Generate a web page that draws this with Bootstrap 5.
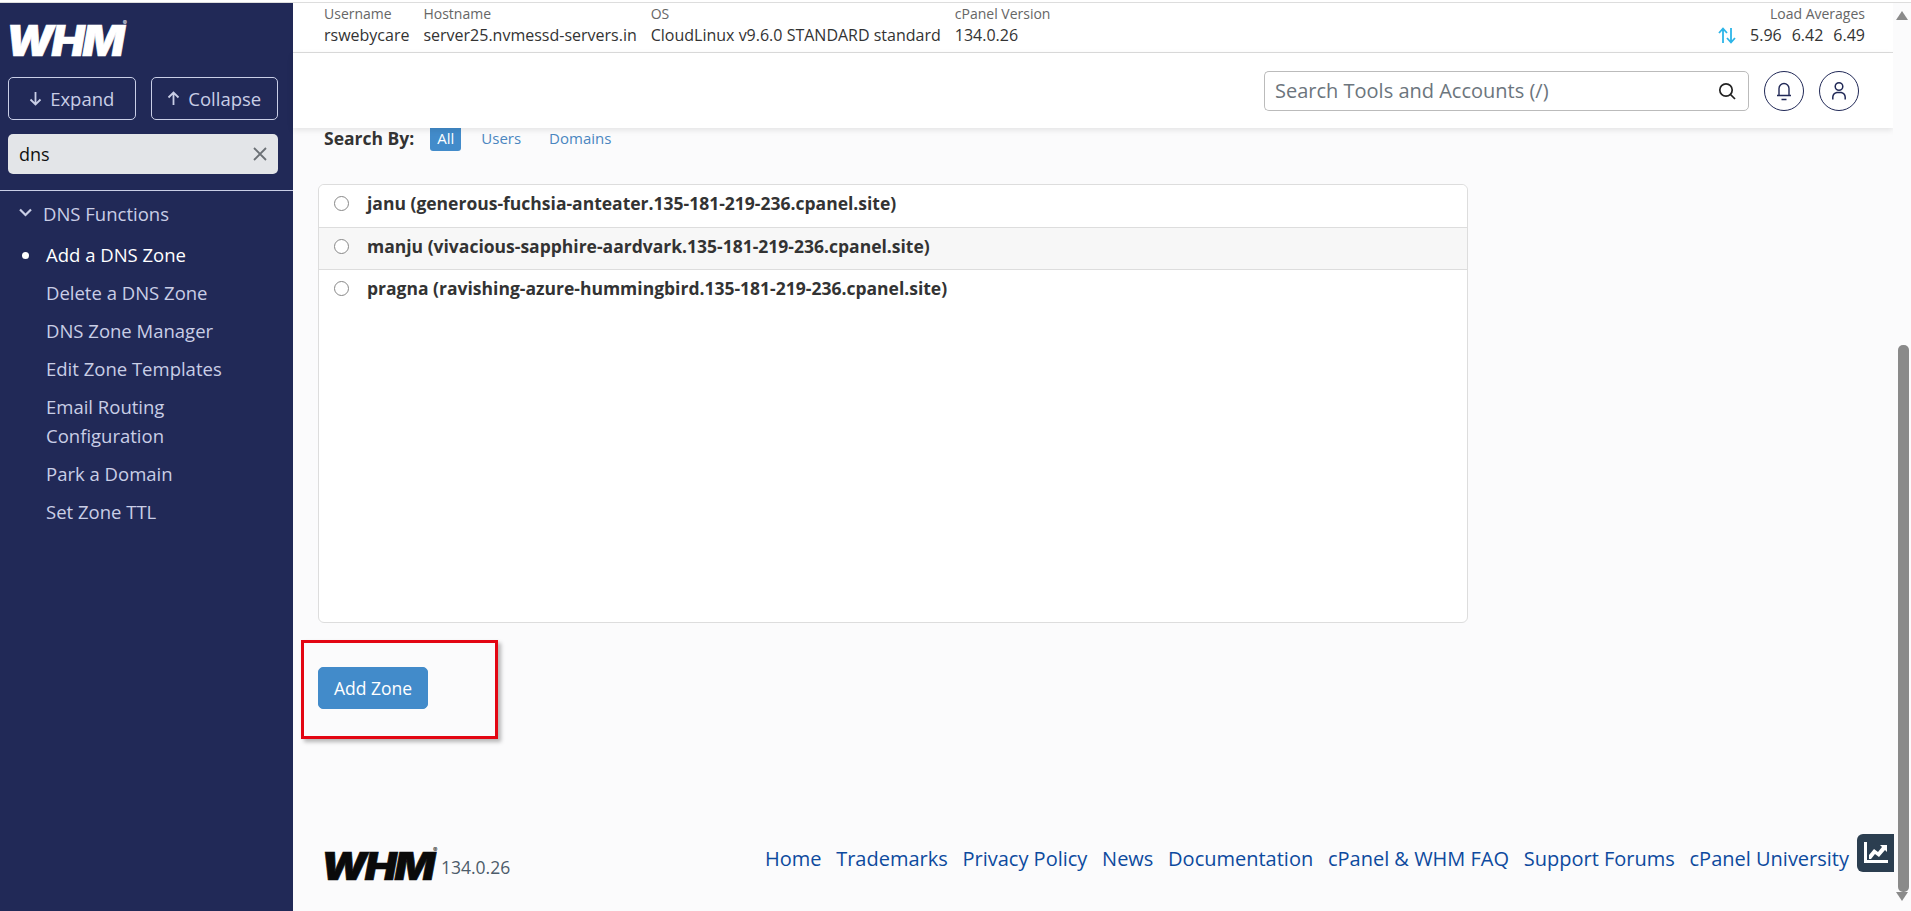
<!DOCTYPE html>
<html lang="en">
<head>
<meta charset="UTF-8" />
<meta name="viewport" content="width=device-width, initial-scale=1.0" />
<title>Add a DNS Zone - WHM</title>
<link href="https://cdn.jsdelivr.net/npm/bootstrap@5.3.3/dist/css/bootstrap.min.css" rel="stylesheet" />
<script src="https://cdn.jsdelivr.net/npm/bootstrap@5.3.3/dist/js/bootstrap.bundle.min.js"></script>
<style>
  html, body { height: 911px; overflow: hidden; }
  body { font-family: "Open Sans", "Liberation Sans", sans-serif; background: #fff; color: #222; }
  .top-strip { height: 3px; background: #fff; border-bottom: 1px solid #ddd; }
  .page-row { height: 908px; }

  /* sidebar */
  .side { width: 293px; background: #212957; flex: none; }
  .logo-text { font-family: Inter, "Liberation Sans", sans-serif; font-weight: 900; font-style: italic; line-height: 1; letter-spacing: -2px; display: inline-block; transform-origin: left center; -webkit-text-stroke: .6px currentColor; }
  .logo-side { color: #fff; font-size: 42px; margin: 17px 0 0 6px; height: 38px; transform: scaleX(1.05); }
  .logo-reg { font-size: 6px; vertical-align: top; font-style: normal; font-weight: 400; letter-spacing: 0; -webkit-text-stroke: 0; }
  .side-btns { padding: 15px 15px 0 8px; gap: 15px; }
  .side-btn { flex: 1 1 0; height: 43px; font-size: 18.5px; color: #c9cee6; border: 1px solid #c9cee6; border-radius: 5px; padding: 0; }
  .side-btn:hover { color: #fff; border-color: #fff; }
  .side-search { margin: 14px 15px 0 8px; }
  .side-search input { height: 40px; background: #e3e5e8; border: 0; border-radius: 5px; font-size: 18px; color: #111; padding-left: 11px; }
  .side-x { position: absolute; right: 11px; top: 13px; }
  .side-line { border-top: 1px solid #c9cee6; margin-top: 16px; }
  .cat-head { color: #c9cee6; font-size: 18.5px; padding: 9px 0 0 19px; height: 44px; gap: 11px; }
  .side-link { display: block; color: #c9cee6; text-decoration: none; font-size: 18.5px; line-height: 29px; padding: 4.5px 20px 4.5px 46px; position: relative; }
  .side-link.on { color: #fff; }
  .side-link.on::before { content: ""; position: absolute; left: 22px; top: 17px; width: 7px; height: 7px; border-radius: 50%; background: #fff; }

  /* header */
  .main-col { background: #fbfbfc; min-width: 0; }
  .info-bar { height: 50px; background: #fff; border-bottom: 1px solid #ddd; padding: 0 28px 0 31px; gap: 14px; }
  .info-lab { font-size: 14px; line-height: 20px; color: #666; padding-top: 1px; }
  .info-val { font-size: 16px; line-height: 22px; color: #333; white-space: nowrap; }
  .load-nums { gap: 10px; }
  .tool-bar { height: 75px; background: #fff; box-shadow: 0 2px 6px rgba(0,0,0,.1); padding: 0 34px 0 0; position: relative; }
  .tool-search { width: 485px; height: 40px; }
  .tool-search input { font-size: 20px; height: 40px; padding: 0 0 0 10px; border-color: #bbb; border-radius: 5px 0 0 5px; }
  .tool-search input::placeholder { color: #6c757d; }
  .tool-search .input-group-text { height: 40px; background: #fff; border-color: #bbb; border-radius: 0 5px 5px 0; padding: 0 12px 0 4px; }
  .round-btn { width: 40px; height: 40px; border: 1px solid #212957; border-radius: 50%; background: #fff; margin-left: 15px; padding: 0; }

  /* content */
  .search-by { height: 23px; margin: 0 0 33px 31px; font-size: 17.5px; }
  .search-by b { font-weight: 700; color: #333; margin-right: 16px; position: relative; top: -1px; }
  .by-pill { font-size: 15px; padding: 0 7px 2px; line-height: 21px; color: #4a86c0; text-decoration: none; border-radius: 3px; margin-right: 14px; }
  .by-pill.on { background: #428bca; color: #fff; border-radius: 0 0 3px 3px; margin-right: 13px; }
  .accts { margin-left: 25px; width: 1150px; height: 439px; border-radius: 6px; border: 1px solid #ddd; overflow: hidden; }
  .acct-row { padding: 0 0 5px 15px; gap: 18px; font-size: 17.5px; font-weight: 700; color: #333; border-color: #ddd; height: 42px; }
  .acct-row:first-child { height: 43px; }
  .acct-row .form-check-input { width: 15px; height: 15px; margin: 0; border-color: #888; }
  .acct-row.alt { background: #f7f7f7; }
  .mark-box { border: 3px solid #e30613; box-shadow: 3px 3px 4px rgba(0,0,0,.28); margin: 17px 0 0 8px; width: 197px; height: 99px; padding: 24px 0 0 14px; }
  .add-btn { background: #428bca; border-color: #428bca; width: 110px; height: 42px; font-size: 17.5px; padding: 0; border-radius: 5px; }

  /* footer */
  .foot { padding: 0 44px 0 30px; margin-top: 105px; }
  .logo-foot { color: #0a0a0a; font-size: 38px; transform: scaleX(1.12); margin-left: -2px; }
  .foot-ver { font-size: 17.5px; color: #4d5c6b; margin-left: 16px; margin-top: 3px; }
  .foot-links { gap: 14.7px; margin-bottom: 14px; }
  .foot-links a { font-size: 20px; color: #0d4a9e; text-decoration: none; white-space: nowrap; }
  .chart-btn { position: absolute; right: 17px; top: 831px; width: 37px; height: 38px; background: #2b3e50; border-radius: 6px 0 0 6px; }

  /* fake scrollbar */
  .sbar { width: 18px; flex: none; background: #fbfbfc; position: relative; }
  .sbar-up, .sbar-dn { position: absolute; left: 3px; width: 0; height: 0; border-left: 6px solid transparent; border-right: 6px solid transparent; }
  .sbar-up { top: 8px; border-bottom: 9px solid #8a8a8a; }
  .sbar-dn { top: 889px; border-top: 9px solid #8a8a8a; }
  .sbar-thumb { position: absolute; left: 5px; width: 11px; top: 342px; height: 547px; background: #8a8a8a; border-radius: 5px; }
</style>
</head>
<body>
  <div class="top-strip"></div>
  <div class="page-row d-flex position-relative">

    <!-- sidebar -->
    <aside class="side d-flex flex-column">
      <div><span class="logo-text logo-side">WHM<span class="logo-reg">®</span></span></div>
      <div class="side-btns d-flex">
        <button class="btn side-btn d-flex align-items-center justify-content-center gap-2">
          <svg width="13" height="15" viewBox="0 0 13 15" fill="none" stroke="currentColor" stroke-width="1.8"><path d="M6.5 1v12M1.5 8.5l5 5 5-5"/></svg>Expand
        </button>
        <button class="btn side-btn d-flex align-items-center justify-content-center gap-2">
          <svg width="13" height="15" viewBox="0 0 13 15" fill="none" stroke="currentColor" stroke-width="1.8"><path d="M6.5 14V2M1.5 6.5l5-5 5 5"/></svg>Collapse
        </button>
      </div>
      <div class="side-search position-relative">
        <input type="text" class="form-control" value="dns" />
        <svg class="side-x" width="14" height="14" viewBox="0 0 14 14" stroke="#6b7075" stroke-width="1.8"><path d="M1 1l12 12M13 1L1 13"/></svg>
      </div>
      <div class="side-line"></div>
      <div class="cat-head d-flex align-items-start">
        <svg class="mt-2" width="13" height="9" viewBox="0 0 13 9" fill="none" stroke="#c9cee6" stroke-width="2.2"><path d="M1 1.5l5.5 5.5L12 1.5"/></svg>
        <span>DNS Functions</span>
      </div>
      <nav>
        <a class="side-link on" href="#">Add a DNS Zone</a>
        <a class="side-link" href="#">Delete a DNS Zone</a>
        <a class="side-link" href="#">DNS Zone Manager</a>
        <a class="side-link" href="#">Edit Zone Templates</a>
        <a class="side-link" href="#">Email Routing Configuration</a>
        <a class="side-link" href="#">Park a Domain</a>
        <a class="side-link" href="#">Set Zone TTL</a>
      </nav>
    </aside>

    <!-- main -->
    <div class="main-col flex-grow-1 d-flex flex-column">
      <div class="info-bar d-flex">
        <div><div class="info-lab">Username</div><div class="info-val">rswebycare</div></div>
        <div><div class="info-lab">Hostname</div><div class="info-val">server25.nvmessd-servers.in</div></div>
        <div><div class="info-lab">OS</div><div class="info-val">CloudLinux v9.6.0 STANDARD standard</div></div>
        <div><div class="info-lab">cPanel Version</div><div class="info-val">134.0.26</div></div>
        <div class="ms-auto text-end">
          <div class="info-lab">Load Averages</div>
          <div class="info-val d-flex align-items-center load-nums">
            <svg width="18" height="17" viewBox="0 0 18 17" fill="none" stroke="#2cb5e8" stroke-width="1.8"><path d="M5 16V2M1 6l4-4.5L9 6M13 1v14M9 11l4 4.5 4-4.5"/></svg>
            <span class="ms-1">5.96</span><span>6.42</span><span>6.49</span>
          </div>
        </div>
      </div>
      <div class="tool-bar d-flex align-items-center justify-content-end">
        <div class="input-group tool-search">
          <input type="text" class="form-control border-end-0" placeholder="Search Tools and Accounts (/)" />
          <span class="input-group-text">
            <svg width="18" height="18" viewBox="0 0 18 18" fill="none" stroke="#222" stroke-width="1.7"><circle cx="8" cy="8" r="6.2"/><path d="M12.5 12.5l4.5 4.5"/></svg>
          </span>
        </div>
        <button class="round-btn d-flex align-items-center justify-content-center">
          <svg width="16" height="20" viewBox="0 0 16 20" fill="none" stroke="#212957" stroke-width="1.4"><path d="M3 14V7.5a5 5 0 0 1 10 0V14M1 14.5h14M5.5 18.5h5"/></svg>
        </button>
        <button class="round-btn d-flex align-items-center justify-content-center">
          <svg width="16" height="20" viewBox="0 0 16 20" fill="none" stroke="#212957" stroke-width="1.5"><circle cx="8" cy="5.5" r="3.8"/><path d="M1.8 18.5v-2.5a5 5 0 0 1 4-4.5h4.4a5 5 0 0 1 4 4.5v2.5"/></svg>
        </button>
      </div>

      <div class="search-by d-flex align-items-center">
        <b>Search By:</b>
        <a class="by-pill on" href="#">All</a>
        <a class="by-pill" href="#">Users</a>
        <a class="by-pill" href="#">Domains</a>
      </div>

      <div class="card accts">
        <ul class="list-group list-group-flush">
          <li class="list-group-item acct-row d-flex align-items-center"><input class="form-check-input" type="radio" name="acct" />janu (generous-fuchsia-anteater.135-181-219-236.cpanel.site)</li>
          <li class="list-group-item acct-row alt d-flex align-items-center"><input class="form-check-input" type="radio" name="acct" />manju (vivacious-sapphire-aardvark.135-181-219-236.cpanel.site)</li>
          <li class="list-group-item acct-row d-flex align-items-center border-0"><input class="form-check-input" type="radio" name="acct" />pragna (ravishing-azure-hummingbird.135-181-219-236.cpanel.site)</li>
        </ul>
      </div>

      <div class="mark-box">
        <button class="btn btn-primary add-btn">Add Zone</button>
      </div>

      <div class="foot d-flex align-items-center justify-content-between">
        <div class="d-flex align-items-center">
          <span class="logo-text logo-foot">WHM<span class="logo-reg">®</span></span>
          <span class="foot-ver">134.0.26</span>
        </div>
        <div class="foot-links d-flex">
          <a href="#">Home</a>
          <a href="#">Trademarks</a>
          <a href="#">Privacy Policy</a>
          <a href="#">News</a>
          <a href="#">Documentation</a>
          <a href="#">cPanel &amp; WHM FAQ</a>
          <a href="#">Support Forums</a>
          <a href="#">cPanel University</a>
        </div>
      </div>
    </div>

    <div class="sbar">
      <div class="sbar-up"></div>
      <div class="sbar-thumb"></div>
      <div class="sbar-dn"></div>
    </div>

    <div class="chart-btn d-flex align-items-center justify-content-center">
      <svg width="26" height="24" viewBox="0 0 26 24" fill="#fff"><path d="M1 1h3v18h21v3H1z"/><path d="M6 14l5-6 4 3 4-5-2-2h7v7l-2-2-6 7-4-3-4 5H6z"/></svg>
    </div>
  </div>
</body>
</html>
